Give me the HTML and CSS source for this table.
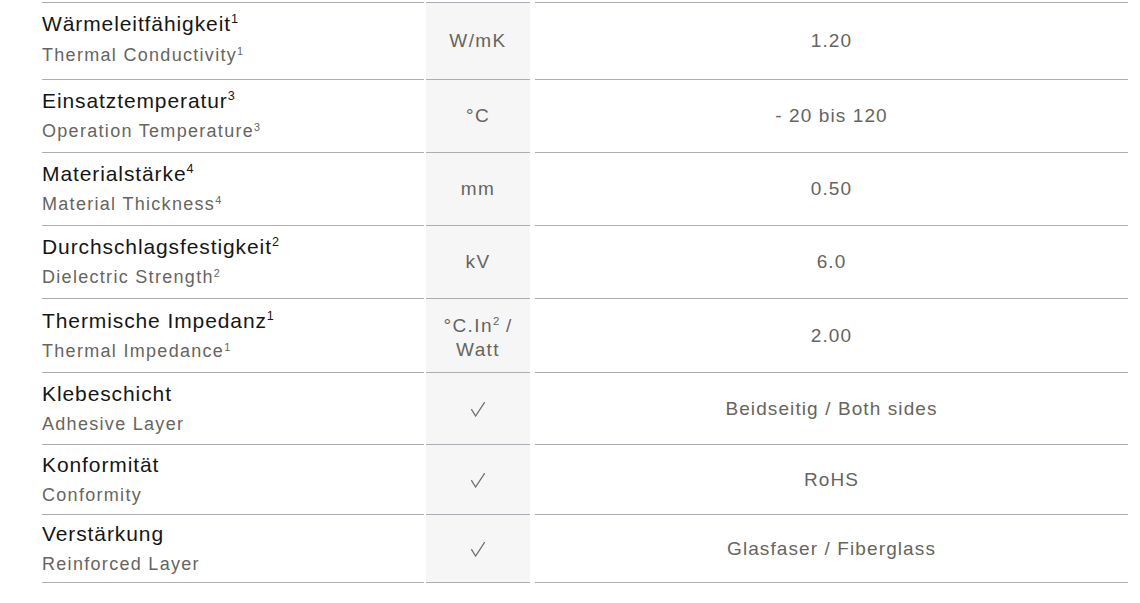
FILE: index.html
```html
<!DOCTYPE html>
<html lang="de">
<head>
<meta charset="utf-8">
<title>Technische Daten</title>
<link rel="stylesheet" href="styles.css">
</head>
<body>
<div class="specs">
  <div class="row">
    <div class="cell label"><div class="de">Wärmeleitfähigkeit<sup>1</sup></div><div class="en">Thermal Conductivity<sup>1</sup></div></div>
    <div class="cell unit"><span>W/mK</span></div>
    <div class="cell value"><span>1.20</span></div>
  </div>
  <div class="row">
    <div class="cell label"><div class="de">Einsatztemperatur<sup>3</sup></div><div class="en">Operation Temperature<sup>3</sup></div></div>
    <div class="cell unit"><span>°C</span></div>
    <div class="cell value"><span>- 20 bis 120</span></div>
  </div>
  <div class="row">
    <div class="cell label"><div class="de">Materialstärke<sup>4</sup></div><div class="en">Material Thickness<sup>4</sup></div></div>
    <div class="cell unit"><span>mm</span></div>
    <div class="cell value"><span>0.50</span></div>
  </div>
  <div class="row">
    <div class="cell label"><div class="de">Durchschlagsfestigkeit<sup>2</sup></div><div class="en">Dielectric Strength<sup>2</sup></div></div>
    <div class="cell unit"><span>kV</span></div>
    <div class="cell value"><span>6.0</span></div>
  </div>
  <div class="row">
    <div class="cell label"><div class="de">Thermische Impedanz<sup>1</sup></div><div class="en">Thermal Impedance<sup>1</sup></div></div>
    <div class="cell unit two-line"><span>°C.In<sup>2</sup> /</span><span>Watt</span></div>
    <div class="cell value"><span>2.00</span></div>
  </div>
  <div class="row">
    <div class="cell label"><div class="de">Klebeschicht</div><div class="en">Adhesive Layer</div></div>
    <div class="cell unit"><svg class="check" viewBox="0 0 14 15" width="14" height="15" aria-label="ja"><path d="M0.6 7.6 L4.6 14 L13.4 0.6" /></svg></div>
    <div class="cell value"><span>Beidseitig / Both sides</span></div>
  </div>
  <div class="row">
    <div class="cell label"><div class="de">Konformität</div><div class="en">Conformity</div></div>
    <div class="cell unit"><svg class="check" viewBox="0 0 14 15" width="14" height="15" aria-label="ja"><path d="M0.6 7.6 L4.6 14 L13.4 0.6" /></svg></div>
    <div class="cell value"><span>RoHS</span></div>
  </div>
  <div class="row">
    <div class="cell label"><div class="de">Verstärkung</div><div class="en">Reinforced Layer</div></div>
    <div class="cell unit"><svg class="check" viewBox="0 0 14 15" width="14" height="15" aria-label="ja"><path d="M0.6 7.6 L4.6 14 L13.4 0.6" /></svg></div>
    <div class="cell value"><span>Glasfaser / Fiberglass</span></div>
  </div>
</div>
</body>
</html>
```
FILE: styles.css
```css
html, body {
  margin: 0;
  padding: 0;
  background: #ffffff;
}
body {
  font-family: "Liberation Sans", Arial, sans-serif;
}
.specs {
  padding: 2px 0 0 42px;
  width: 1086px;
}
.row {
  display: flex;
  height: 73px;
}
.row:first-child { height: 78px; }
.row:nth-child(5) { height: 74px; }
.row:nth-child(6) { height: 72px; }
.row:nth-child(7) { height: 70px; }
.row:nth-child(8) { height: 68px; }

.cell {
  border-bottom: 1px solid #aeadb3;
  box-sizing: border-box;
  display: flex;
  flex-direction: column;
  justify-content: center;
}
.row:first-child .cell {
  border-top: 1px solid #aeadb3;
}
.label {
  width: 382px;
}
.unit {
  width: 104px;
  margin-left: 2px;
  background: #f6f6f6;
  text-align: center;
  align-items: center;
  color: #666560;
  font-size: 19px;
  letter-spacing: 1.4px;
  line-height: 24px;
  padding: 0 6px;
}
.two-line {
  padding-top: 4px;
}
.value {
  flex: 1;
  margin-left: 5px;
  align-items: center;
  color: #666560;
  font-size: 19px;
  letter-spacing: 1.1px;
}
.check {
  fill: none;
  stroke: #707070;
  stroke-width: 1.3;
  stroke-linejoin: miter;
  stroke-linecap: round;
  margin-top: 2px;
}
.de {
  color: #161616;
  font-size: 21px;
  letter-spacing: 0.9px;
  line-height: 30px;
}
.row:first-child .de { margin-top: -3px; }
.row:first-child .en { line-height: 32px; }
.en {
  color: #666560;
  font-size: 18px;
  letter-spacing: 1.3px;
  line-height: 30px;
}
sup {
  font-size: 0.6em;
  letter-spacing: 0;
  vertical-align: 0.6em;
  line-height: 0;
}
```
